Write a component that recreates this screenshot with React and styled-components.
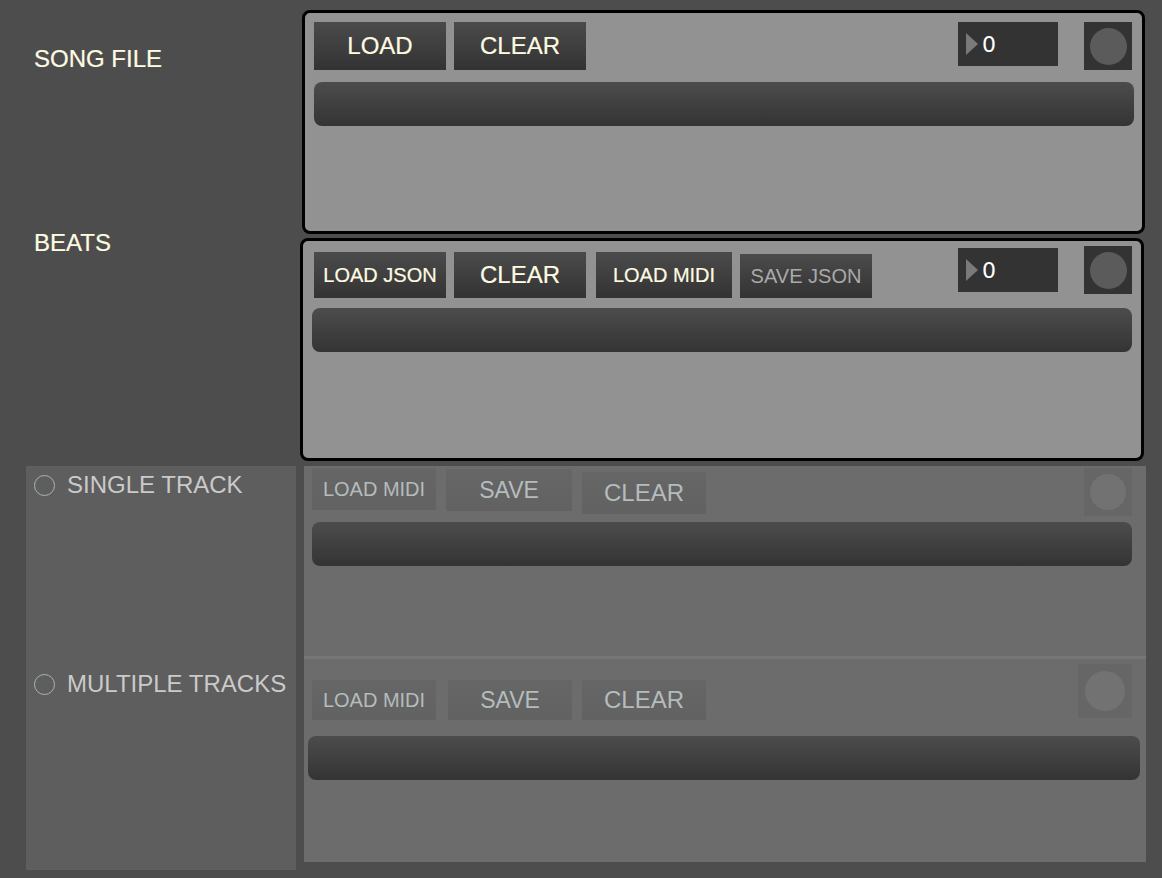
import React from "react";
import styled, { createGlobalStyle, css } from "styled-components";

const GlobalStyle = createGlobalStyle`
  html, body {
    margin: 0;
    padding: 0;
    background: #4d4d4d;
  }
  body {
    font-family: "Liberation Sans", Arial, sans-serif;
    min-height: 878px;
  }
  * { box-sizing: border-box; }
`;

const CREAM = "#fffbe2";
const MUTED_TEXT = "#b4bcbd";

const Page = styled.div`
  width: 1162px;
  min-height: 878px;
  padding-top: 10px;
  display: flex;
  flex-direction: column;
`;

const TopArea = styled.div`
  display: grid;
  grid-template-columns: 300px 1fr;
`;

const LabelColumn = styled.div`
  display: flex;
  flex-direction: column;
  padding: 35px 0 0 34px;
`;

const SectionLabel = styled.div`
  font-size: 24px;
  line-height: 28px;
  color: ${CREAM};
  margin-bottom: ${(p) => p.$mb || 0}px;
  white-space: nowrap;
  -webkit-text-stroke: 0.2px ${CREAM};
`;

const PanelColumn = styled.div`
  display: flex;
  flex-direction: column;
  gap: 4px;
`;

const Panel = styled.div`
  margin-left: ${(p) => p.$ml || 0}px;
  width: ${(p) => p.$w}px;
  height: ${(p) => p.$h}px;
  border: 3px solid #000;
  border-radius: 8px;
  background: #929292;
  padding: ${(p) => p.$pad};
  display: flex;
  flex-direction: column;
`;

const Toolbar = styled.div`
  display: flex;
  align-items: flex-start;
  padding-right: ${(p) => p.$pr || 0}px;
`;

const Spacer = styled.div`
  flex: 1;
`;

const buttonVariants = {
  active: css`
    background: linear-gradient(#4b4b4b, #333333);
    color: ${CREAM};
    -webkit-text-stroke: 0.2px ${CREAM};
  `,
  muted: css`
    background: linear-gradient(#4b4b4b, #333333);
    color: #a9a9a9;
  `,
  disabled: css`
    background: linear-gradient(#666666, #626262);
    color: ${MUTED_TEXT};
  `,
};

const Button = styled.button`
  flex: none;
  width: ${(p) => p.$w}px;
  height: ${(p) => p.$h}px;
  margin-top: ${(p) => p.$mt || 0}px;
  margin-left: ${(p) => p.$ml || 0}px;
  border: none;
  padding: 0;
  font-family: "Liberation Sans", Arial, sans-serif;
  font-size: ${(p) => p.$size}px;
  line-height: 1;
  display: flex;
  align-items: center;
  justify-content: center;
  white-space: nowrap;
  cursor: default;
  ${(p) => buttonVariants[p.$variant || "active"]}
`;

const NumberBox = styled.div`
  flex: none;
  width: 100px;
  height: 44px;
  margin-top: ${(p) => p.$mt || 0}px;
  background: #333333;
  display: flex;
  align-items: center;
  padding-left: 8px;
  gap: 4px;
  color: #ffffff;
  font-family: "DejaVu Sans", sans-serif;
  font-size: 22px;
`;

const NumberValue = styled.span`
  line-height: 1;
  margin-top: 1px;
`;

const ToggleBox = styled.div`
  flex: none;
  width: ${(p) => p.$size}px;
  height: ${(p) => p.$size}px;
  margin-top: ${(p) => p.$mt || 0}px;
  margin-left: ${(p) => p.$ml || 0}px;
  background: ${(p) => (p.$disabled ? "#666666" : "#333333")};
  display: flex;
  align-items: center;
  justify-content: center;
`;

const ToggleDot = styled.div`
  width: ${(p) => p.$d}px;
  height: ${(p) => p.$d}px;
  border-radius: 50%;
  background: ${(p) => (p.$disabled ? "#727272" : "#5b5b5b")};
`;

const Bar = styled.div`
  flex: none;
  height: 44px;
  margin: ${(p) => p.$mt}px ${(p) => p.$mr || 0}px 0 ${(p) => p.$ml || 0}px;
  border-radius: 8px;
  background: linear-gradient(#4c4c4c, #343434);
`;

const LowerArea = styled.div`
  display: flex;
  align-items: flex-start;
  margin-top: 5px;
`;

const ModePanel = styled.div`
  margin-left: 26px;
  width: 270px;
  height: 404px;
  background: #5e5e5e;
  padding: 5px 0 0 8px;
  display: flex;
  flex-direction: column;
`;

const RadioRow = styled.label`
  display: flex;
  align-items: center;
  gap: 12px;
  height: 28px;
  margin-top: ${(p) => p.$mt || 0}px;
  font-size: 24px;
  line-height: 28px;
  color: #cbcaca;
  white-space: nowrap;
`;

const RadioCircle = styled.span`
  flex: none;
  width: 21px;
  height: 21px;
  border-radius: 50%;
  border: 1.5px solid #a8b4b6;
`;

const TrackPanel = styled.div`
  margin-left: 8px;
  width: 842px;
  height: 396px;
  background: #6c6c6c;
  display: flex;
  flex-direction: column;
`;

const TrackSection = styled.div`
  height: ${(p) => p.$h}px;
  padding: ${(p) => p.$pad};
  display: flex;
  flex-direction: column;
`;

const Divider = styled.div`
  height: 3px;
  background: #767676;
`;

const Triangle = () => (
  <svg width="12" height="22" viewBox="0 0 12 22" aria-hidden="true">
    <polygon points="0,0 12,11 0,22" fill="#7a7a7a" />
  </svg>
);

export default function App() {
  return (
    <>
      <GlobalStyle />
      <Page>
        <TopArea>
          <LabelColumn>
            <SectionLabel $mb={156}>SONG FILE</SectionLabel>
            <SectionLabel>BEATS</SectionLabel>
          </LabelColumn>
          <PanelColumn>
            <Panel $ml={2} $w={843} $h={224} $pad="9px 0 0 9px">
              <Toolbar $pr={10}>
                <Button $w={132} $h={48} $size={24}>LOAD</Button>
                <Button $w={132} $h={48} $size={24} $ml={8}>CLEAR</Button>
                <Spacer />
                <NumberBox>
                  <Triangle />
                  <NumberValue>0</NumberValue>
                </NumberBox>
                <ToggleBox $size={48} $ml={26}>
                  <ToggleDot $d={37} />
                </ToggleBox>
              </Toolbar>
              <Bar $mt={12} $mr={8} />
            </Panel>
            <Panel $w={844} $h={223} $pad="5px 0 0 9px">
              <Toolbar $pr={9}>
                <Button $w={132} $h={46} $mt={6} $ml={2} $size={20}>LOAD JSON</Button>
                <Button $w={132} $h={46} $mt={6} $ml={8} $size={24}>CLEAR</Button>
                <Button $w={136} $h={46} $mt={6} $ml={10} $size={20}>LOAD MIDI</Button>
                <Button $w={132} $h={44} $mt={8} $ml={8} $size={20} $variant="muted">SAVE JSON</Button>
                <Spacer />
                <NumberBox $mt={2}>
                  <Triangle />
                  <NumberValue>0</NumberValue>
                </NumberBox>
                <ToggleBox $size={48} $ml={26}>
                  <ToggleDot $d={37} />
                </ToggleBox>
              </Toolbar>
              <Bar $mt={10} $mr={9} />
            </Panel>
          </PanelColumn>
        </TopArea>

        <LowerArea>
          <ModePanel>
            <RadioRow>
              <RadioCircle />
              SINGLE TRACK
            </RadioRow>
            <RadioRow $mt={171}>
              <RadioCircle />
              MULTIPLE TRACKS
            </RadioRow>
          </ModePanel>

          <TrackPanel>
            <TrackSection $h={190} $pad="2px 0 0 8px">
              <Toolbar $pr={14}>
                <Button $w={124} $h={42} $mt={0} $size={20} $variant="disabled">LOAD MIDI</Button>
                <Button $w={126} $h={42} $mt={1} $ml={10} $size={23} $variant="disabled">SAVE</Button>
                <Button $w={124} $h={42} $mt={4} $ml={10} $size={24} $variant="disabled">CLEAR</Button>
                <Spacer />
                <ToggleBox $size={48} $disabled>
                  <ToggleDot $d={36} $disabled />
                </ToggleBox>
              </Toolbar>
              <Bar $mt={6} $mr={14} />
            </TrackSection>
            <Divider />
            <TrackSection $h={203} $pad="5px 0 0 4px">
              <Toolbar $pr={14}>
                <Button $w={124} $h={40} $mt={16} $ml={4} $size={20} $variant="disabled">LOAD MIDI</Button>
                <Button $w={124} $h={40} $mt={16} $ml={12} $size={23} $variant="disabled">SAVE</Button>
                <Button $w={124} $h={40} $mt={16} $ml={10} $size={24} $variant="disabled">CLEAR</Button>
                <Spacer />
                <ToggleBox $size={54} $disabled>
                  <ToggleDot $d={40} $disabled />
                </ToggleBox>
              </Toolbar>
              <Bar $mt={16} $mr={6} />
            </TrackSection>
          </TrackPanel>
        </LowerArea>
      </Page>
    </>
  );
}
